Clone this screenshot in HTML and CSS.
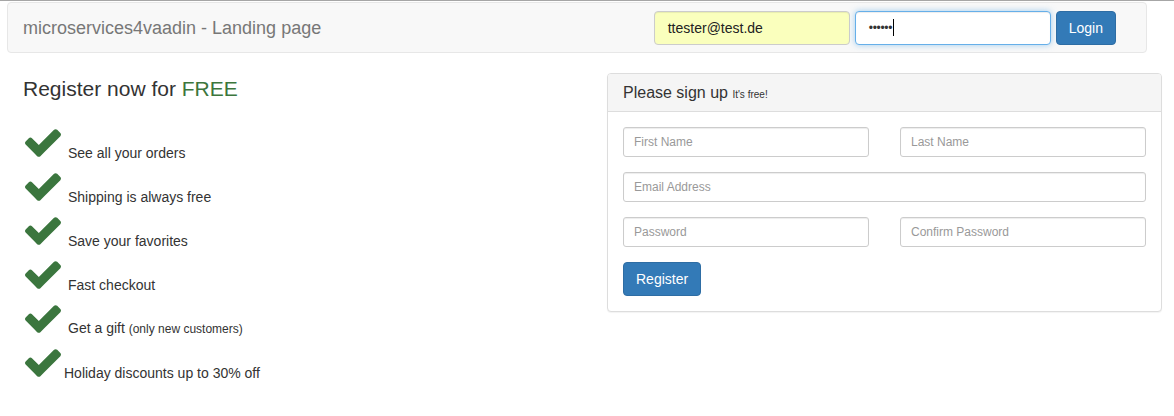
FILE: index.html
```html
<!DOCTYPE html>
<html lang="en">
<head>
<meta charset="utf-8">
<title>microservices4vaadin - Landing page</title>
<link rel="stylesheet" href="styles.css">
</head>
<body>
<header class="navbar">
  <div class="brand">microservices4vaadin - Landing page</div>
  <form class="login-form">
    <div class="field field-autofill">ttester@test.de</div>
    <div class="field field-focus"><span class="dots">••••••</span><span class="caret"></span></div>
    <button type="button" class="btn btn-primary">Login</button>
  </form>
</header>

<main class="main">
  <section class="intro">
    <h3 class="intro-title">Register now for <span class="free">FREE</span></h3>
    <ul class="benefits">
      <li class="benefit"><svg class="check" viewBox="121 334 1550 1188"><path d="M1671 566q0 40-28 68l-724 724-136 136q-28 28-68 28t-68-28l-136-136-362-362q-28-28-28-68t28-68l136-136q28-28 68-28t68 28l294 295 656-657q28-28 68-28t68 28l136 136q28 28 28 68z"/></svg><span class="benefit-text">See all your orders</span></li>
      <li class="benefit"><svg class="check" viewBox="121 334 1550 1188"><path d="M1671 566q0 40-28 68l-724 724-136 136q-28 28-68 28t-68-28l-136-136-362-362q-28-28-28-68t28-68l136-136q28-28 68-28t68 28l294 295 656-657q28-28 68-28t68 28l136 136q28 28 28 68z"/></svg><span class="benefit-text">Shipping is always free</span></li>
      <li class="benefit"><svg class="check" viewBox="121 334 1550 1188"><path d="M1671 566q0 40-28 68l-724 724-136 136q-28 28-68 28t-68-28l-136-136-362-362q-28-28-28-68t28-68l136-136q28-28 68-28t68 28l294 295 656-657q28-28 68-28t68 28l136 136q28 28 28 68z"/></svg><span class="benefit-text">Save your favorites</span></li>
      <li class="benefit"><svg class="check" viewBox="121 334 1550 1188"><path d="M1671 566q0 40-28 68l-724 724-136 136q-28 28-68 28t-68-28l-136-136-362-362q-28-28-28-68t28-68l136-136q28-28 68-28t68 28l294 295 656-657q28-28 68-28t68 28l136 136q28 28 28 68z"/></svg><span class="benefit-text">Fast checkout</span></li>
      <li class="benefit"><svg class="check" viewBox="121 334 1550 1188"><path d="M1671 566q0 40-28 68l-724 724-136 136q-28 28-68 28t-68-28l-136-136-362-362q-28-28-28-68t28-68l136-136q28-28 68-28t68 28l294 295 656-657q28-28 68-28t68 28l136 136q28 28 28 68z"/></svg><span class="benefit-text">Get a gift <small class="note">(only new customers)</small></span></li>
      <li class="benefit benefit-tight"><svg class="check" viewBox="121 334 1550 1188"><path d="M1671 566q0 40-28 68l-724 724-136 136q-28 28-68 28t-68-28l-136-136-362-362q-28-28-28-68t28-68l136-136q28-28 68-28t68 28l294 295 656-657q28-28 68-28t68 28l136 136q28 28 28 68z"/></svg><span class="benefit-text">Holiday discounts up to 30% off</span></li>
    </ul>
  </section>

  <section class="panel">
    <div class="panel-heading">
      <h3 class="panel-title">Please sign up <small class="panel-sub">It's free!</small></h3>
    </div>
    <div class="panel-body">
      <div class="form-row">
        <div class="input-sm placeholder">First Name</div>
        <div class="input-sm placeholder">Last Name</div>
      </div>
      <div class="form-row form-row-full">
        <div class="input-sm placeholder">Email Address</div>
      </div>
      <div class="form-row">
        <div class="input-sm placeholder">Password</div>
        <div class="input-sm placeholder">Confirm Password</div>
      </div>
      <button type="button" class="btn btn-primary">Register</button>
    </div>
  </section>
</main>
</body>
</html>
```

FILE: styles.css
```css
html, body {
  margin: 0;
  padding: 0;
  background: #fff;
}

body {
  border-top: 1px solid #a6a6a6;
  font-family: "Liberation Sans", Arial, Helvetica, sans-serif;
  font-size: 14px;
  color: #333;
  min-height: 415px;
}

/* ---------- navbar ---------- */
.navbar {
  box-sizing: border-box;
  margin: 1px 0 0 7px;
  width: 1140px;
  height: 51px;
  background: #f8f8f8;
  border: 1px solid #e7e7e7;
  border-radius: 4px;
  display: flex;
  align-items: center;
  padding: 0 30px 0 15px;
}

.brand {
  font-size: 18px;
  color: #777;
  line-height: 20px;
}

.login-form {
  margin: 0 0 0 auto;
  display: flex;
  gap: 5px;
  align-items: center;
}

.field {
  box-sizing: border-box;
  width: 196px;
  height: 34px;
  padding: 6px 13px;
  border: 1px solid #ccc;
  border-radius: 4px;
  background: #fff;
  font-size: 14px;
  line-height: 20px;
  color: #333;
  box-shadow: inset 0 1px 1px rgba(0, 0, 0, 0.075);
  display: flex;
  align-items: center;
}

.field-autofill {
  background: #faffbd;
  color: #222;
}

.field-focus {
  border-color: #66afe9;
  box-shadow: inset 0 1px 1px rgba(0, 0, 0, 0.075), 0 0 6px rgba(102, 175, 233, 0.6);
}

.dots {
  font-size: 12px;
  letter-spacing: -0.3px;
  color: #333;
}

.caret {
  display: inline-block;
  width: 0;
  height: 17px;
  border-left: 1px solid #000;
  margin-left: 1px;
}

.btn {
  box-sizing: border-box;
  height: 34px;
  padding: 6px 12px;
  font-family: inherit;
  font-size: 14px;
  line-height: 20px;
  border-radius: 4px;
  border: 1px solid transparent;
  cursor: pointer;
}

.btn-primary {
  background: #337ab7;
  border-color: #2e6da4;
  color: #fff;
}

/* ---------- main ---------- */
.main {
  display: flex;
  align-items: flex-start;
  padding: 20px 0 30px 23px;
}

.intro {
  width: 584px;
  flex: none;
}

.intro-title {
  margin: 4px 0 0;
  font-size: 21px;
  font-weight: normal;
  line-height: 23px;
  color: #333;
}

.free {
  color: #3c763d;
}

.benefits {
  list-style: none;
  margin: 13px 0 0;
  padding: 0 0 0 2px;
}

.benefit {
  height: 44px;
  display: flex;
  align-items: flex-end;
  gap: 7px;
}

.benefit-tight {
  gap: 3px;
}

.check {
  width: 36px;
  height: 28px;
  fill: #3b763e;
  flex: none;
}

.benefit-text {
  font-size: 14px;
  line-height: 10px;
  margin-bottom: -1px;
  color: #333;
  white-space: nowrap;
}

.note {
  font-size: 12px;
}

/* ---------- panel ---------- */
.panel {
  box-sizing: border-box;
  width: 555px;
  flex: none;
  border: 1px solid #ddd;
  border-radius: 4px;
  box-shadow: 0 1px 1px rgba(0, 0, 0, 0.05);
  background: #fff;
}

.panel-heading {
  background: #f5f5f5;
  border-bottom: 1px solid #ddd;
  border-radius: 3px 3px 0 0;
  padding: 10px 15px;
  height: 38px;
  box-sizing: border-box;
}

.panel-title {
  margin: 0;
  font-size: 16px;
  font-weight: normal;
  line-height: 17px;
  color: #333;
}

.panel-sub {
  font-size: 10px;
  color: #333;
}

.panel-body {
  padding: 15px;
}

.form-row {
  display: grid;
  grid-template-columns: 1fr 1fr;
  column-gap: 31px;
  margin-bottom: 15px;
}

.form-row-full {
  grid-template-columns: 1fr;
}

.input-sm {
  box-sizing: border-box;
  height: 30px;
  padding: 5px 10px;
  border: 1px solid #ccc;
  border-radius: 3px;
  font-size: 12px;
  line-height: 18px;
  box-shadow: inset 0 1px 1px rgba(0, 0, 0, 0.075);
  background: #fff;
}

.placeholder {
  color: #999;
}
```
